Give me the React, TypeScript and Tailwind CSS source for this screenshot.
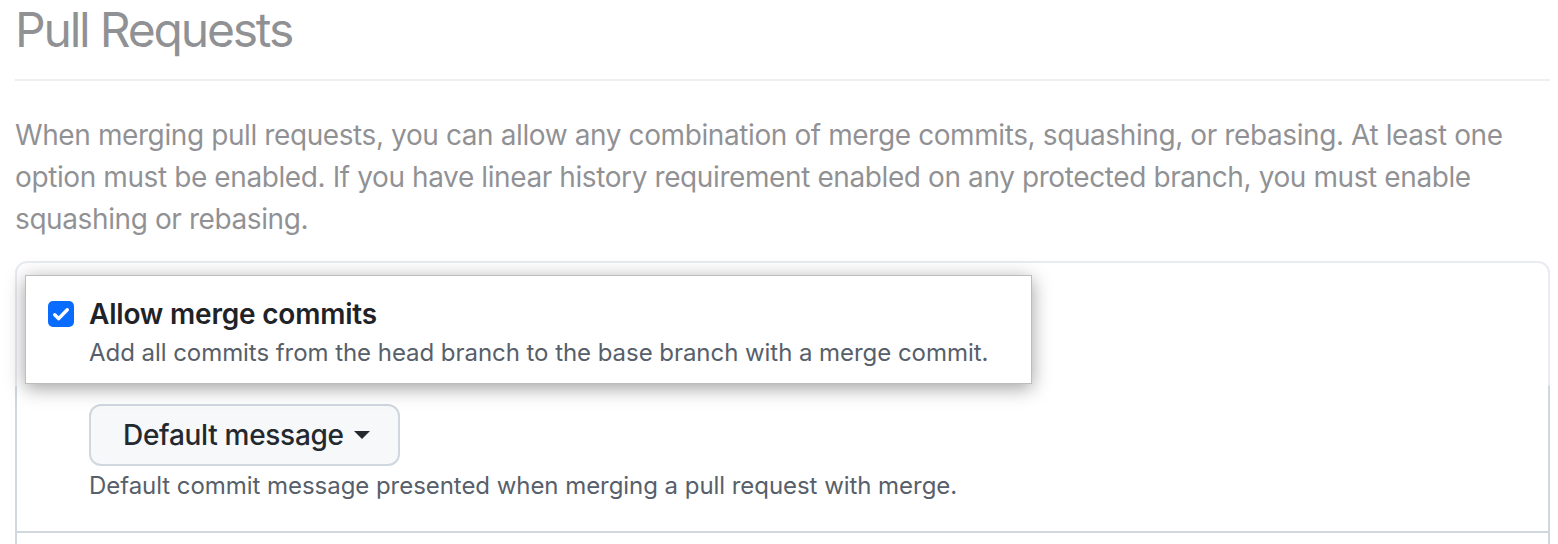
const font = { fontFamily: "Inter, 'Noto Sans', sans-serif" };

const CheckIcon = () => (
  <svg viewBox="0 0 16 16" className="w-[20px] h-[20px]" fill="none">
    <path d="M3 8.6l3.1 3.1L13 4.6" stroke="white" strokeWidth="2.8" strokeLinecap="round" strokeLinejoin="round" />
  </svg>
);

const Caret = () => (
  <svg viewBox="0 0 16 8" className="w-[16px] h-[8px]">
    <path d="M0 0h16L8 8z" fill="#24292f" />
  </svg>
);

export default function App() {
  return (
    <div className="relative w-[1558px] h-[544px] overflow-hidden bg-white pl-[15px] pr-[8px]" style={font}>
      {/* Title */}
      <div className="border-b-2 border-[#d8dee4] pb-[19px]">
        <h2 className="text-[48px] leading-[60px] tracking-[-2.2px] text-[#1f2328] font-normal">Pull Requests</h2>
      </div>

      {/* Intro */}
      <p className="mt-[33px] mb-[21px] text-[28px] leading-[42px] tracking-[-0.4px] text-[#1f2328]">
        When merging pull requests, you can allow any combination of merge commits, squashing, or rebasing. At least one
        option must be enabled. If you have linear history requirement enabled on any protected branch, you must enable
        squashing or rebasing.
      </p>

      {/* Settings box */}
      <div className="border-2 border-[#d0d7de] rounded-[12px] h-[400px]">
        <div className="relative z-10 ml-[8px] mt-[12px] w-[1007px] bg-white border border-[#bdbdbd] shadow-[0_4px_18px_rgba(0,0,0,0.38)] pt-[20px] pb-[13px] pl-[22px] flex gap-[15px]">
          <div className="mt-[5px] w-[26px] h-[26px] rounded-[5px] bg-[#0a6cff] flex items-center justify-center shrink-0">
            <CheckIcon />
          </div>
          <div>
            <div className="text-[28px] leading-[36px] font-semibold tracking-[-0.2px] text-[#1f2328]">Allow merge commits</div>
            <div className="mt-[4px] text-[24px] leading-[34px] tracking-[-0.05px] text-[#57606a]">
              Add all commits from the head branch to the base branch with a merge commit.
            </div>
          </div>
        </div>

        <div className="pl-[72px] pt-[20px] pb-[28px] border-b-2 border-[#d0d7de]">
          <button className="h-[62px] w-[311px] rounded-[12px] border-2 border-[#d0d7de] bg-[#f6f8fa] pl-[32px] flex items-center gap-[10px] text-[28px] font-medium tracking-[-0.3px] text-[#24292f]">
            Default message
            <Caret />
          </button>
          <div className="mt-[3px] text-[24px] leading-[34px] tracking-[-0.05px] text-[#57606a]">
            Default commit message presented when merging a pull request with merge.
          </div>
        </div>
      </div>

      {/* Fade overlay over the non-highlighted area */}
      <div className="absolute top-0 left-0 right-0 h-[386px] bg-white/50" />
    </div>
  );
}
